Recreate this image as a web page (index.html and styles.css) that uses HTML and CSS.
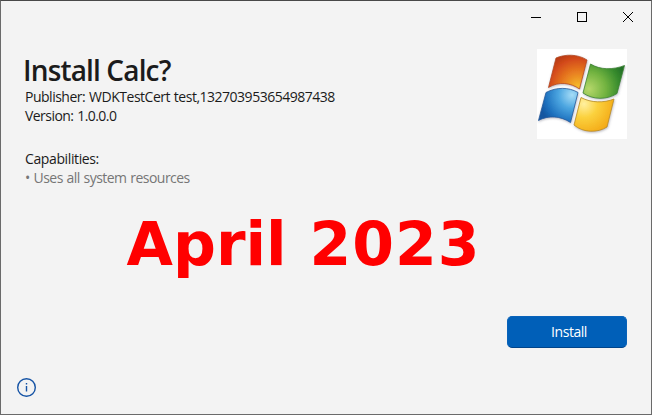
FILE: index.html
```html
<!DOCTYPE html>
<html lang="en">
<head>
<meta charset="utf-8">
<title>Install Calc?</title>
<link rel="stylesheet" href="styles.css">
</head>
<body>
<main class="window">
  <header class="titlebar">
    <svg class="control" viewBox="0 0 46 32" shape-rendering="crispEdges"><path d="M18 16.5h10"/></svg>
    <svg class="control" viewBox="0 0 46 32" shape-rendering="crispEdges"><path d="M18.500 11.500h9v9h-9z"/></svg>
    <svg class="control" viewBox="0 0 46 32"><path d="M18 11l10 10M28 11l-10 10"/></svg>
  </header>
  <section class="summary">
    <div class="details">
      <h1 class="heading">Install Calc?</h1>
      <p class="line publisher">Publisher: WDKTestCert test,132703953654987438</p>
      <p class="line version">Version: 1.0.0.0</p>
      <p class="line capabilities">Capabilities:</p>
      <p class="line resource">• Uses all system resources</p>
    </div>
    <svg class="logo" viewBox="0 0 90 90">
      <defs>
        <radialGradient id="red" gradientUnits="userSpaceOnUse" cx="41" cy="38" r="35"><stop offset="0" stop-color="#f6bd2b"/><stop offset=".45" stop-color="#e77a20"/><stop offset=".8" stop-color="#d34a1a"/><stop offset="1" stop-color="#b93a12"/></radialGradient>
        <radialGradient id="green" gradientUnits="userSpaceOnUse" cx="52" cy="40" r="38"><stop offset="0" stop-color="#b5d76a"/><stop offset=".45" stop-color="#72b340"/><stop offset=".8" stop-color="#378b2d"/><stop offset="1" stop-color="#247228"/></radialGradient>
        <radialGradient id="blue" gradientUnits="userSpaceOnUse" cx="35" cy="46" r="34"><stop offset="0" stop-color="#a5dcf7"/><stop offset=".4" stop-color="#4ba5e0"/><stop offset=".8" stop-color="#1c6fbd"/><stop offset="1" stop-color="#1656a0"/></radialGradient>
        <radialGradient id="yellow" gradientUnits="userSpaceOnUse" cx="47" cy="55" r="34"><stop offset="0" stop-color="#fff0a0"/><stop offset=".4" stop-color="#fbd13d"/><stop offset="1" stop-color="#f3a411"/></radialGradient>
        <filter id="shade" x="-15%" y="-15%" width="130%" height="130%"><feDropShadow dx=".5" dy="1" stdDeviation="1.2" flood-color="#667" flood-opacity=".45"/></filter>
      </defs>
      <g filter="url(#shade)" stroke-width=".8" stroke-linejoin="round">
        <path fill="url(#red)" stroke="#b34a20" d="M19 9C28 5 41 5 50 11L42.500 40C34 34 22 32 11.500 38.500Z"/>
        <path fill="url(#green)" stroke="#3c8130" d="M53.500 15C63 21 76 21 87.500 16.500L80 44.500C70 51 56 51 46 44Z"/>
        <path fill="url(#blue)" stroke="#245b9b" d="M9 43.500C19 38 32 38 41 43.500L33.500 73.500C24 67 11 66 1.500 71.500Z"/>
        <path fill="url(#yellow)" stroke="#b58a20" d="M44 48.500C54 54 67 54 77 50L70 78C61 84 46 84 37 76Z"/>
      </g>
    </svg>
  </section>
  <p class="date">April <span class="year">2023</span></p>
  <div class="actions"><button class="install" type="button">Install</button></div>
  <footer class="footer">
    <svg class="info" viewBox="0 0 20 20"><circle cx="10.500" cy="10.500" r="8.800"/><path d="M10.500 9v5.500M10.500 6v1.500"/></svg>
  </footer>
</main>
</body>
</html>
```
FILE: styles.css
```css
* { box-sizing: border-box; }
body { margin: 0; }
h1, p { margin: 0; }
.window {
  width: 652px;
  height: 415px;
  display: flex;
  flex-direction: column;
  background: #f3f3f3;
  border: 1px solid #6a6a6a;
  border-top-color: #484848;
  color: #1b1b1b;
  font-family: "Open Sans", "Noto Sans", sans-serif;
  overflow: hidden;
}
.titlebar { height: 48px; display: flex; justify-content: flex-end; }
.control { width: 46px; height: 32px; fill: none; stroke: #000; stroke-width: 1; }
.summary { display: flex; justify-content: space-between; height: 164px; padding: 0 24px; }
.details { display: flex; flex-direction: column; white-space: nowrap; }
.heading { height: 38px; margin-left: -2px; font-size: 28px; line-height: 42px; font-weight: 600; letter-spacing: -0.85px; }
.line { font-size: 14px; line-height: 19px; letter-spacing: -0.49px; word-spacing: 0.7px; }
.version { letter-spacing: -0.55px; }
.capabilities { margin-top: 24px; letter-spacing: -0.38px; }
.resource { color: #767676; letter-spacing: -0.54px; }
.logo { width: 90px; height: 90px; background: #fff; }
.date {
  height: 103px;
  padding-left: 125.5px;
  font: bold 60px/62px "DejaVu Sans", sans-serif;
  color: #f00;
}
.year { margin-left: 2px; letter-spacing: 1px; }
.actions { display: flex; justify-content: flex-end; padding-right: 24px; }
.install {
  width: 120px;
  height: 32px;
  padding: 0 0 1px 4px;
  border: 1px solid #0862b9;
  border-bottom-color: #00448a;
  border-radius: 5px;
  background: #005fb8;
  color: #fff;
  font: 14px/19px "Open Sans", sans-serif;
  letter-spacing: -0.45px;
}
.footer { padding: 29px 15px 0; }
.info { display: block; width: 20px; height: 20px; fill: none; stroke: #1553a5; stroke-width: 1.4; }
```
